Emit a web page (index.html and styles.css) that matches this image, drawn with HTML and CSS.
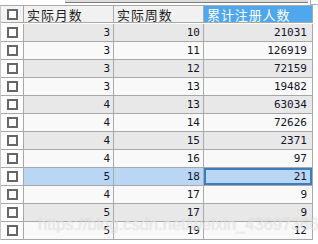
FILE: index.html
```html
<!DOCTYPE html>
<html>
<head>
<meta charset="utf-8">
<link rel="stylesheet" href="styles.css">
</head>
<body>
<div class="topstrip">
  <div class="topbar"></div>
  <div class="topbox"></div>
</div>
<div class="grid">
  <div class="cell hd chk"><span class="box"></span></div>
  <div class="cell hd">实际月数</div>
  <div class="cell hd">实际周数</div>
  <div class="cell hd active">累计注册人数</div>

  <div class="cell chk"><span class="box"></span></div><div class="cell num odd">3</div><div class="cell num odd">10</div><div class="cell num odd">21031</div>
  <div class="cell chk"><span class="box"></span></div><div class="cell num even">3</div><div class="cell num even">11</div><div class="cell num even">126919</div>
  <div class="cell chk"><span class="box"></span></div><div class="cell num odd">3</div><div class="cell num odd">12</div><div class="cell num odd">72159</div>
  <div class="cell chk"><span class="box"></span></div><div class="cell num even">3</div><div class="cell num even">13</div><div class="cell num even">19482</div>
  <div class="cell chk"><span class="box"></span></div><div class="cell num odd">4</div><div class="cell num odd">13</div><div class="cell num odd">63034</div>
  <div class="cell chk"><span class="box"></span></div><div class="cell num even">4</div><div class="cell num even">14</div><div class="cell num even">72626</div>
  <div class="cell chk"><span class="box"></span></div><div class="cell num odd">4</div><div class="cell num odd">15</div><div class="cell num odd">2371</div>
  <div class="cell chk"><span class="box"></span></div><div class="cell num even">4</div><div class="cell num even">16</div><div class="cell num even">97</div>
  <div class="cell chk"><span class="box"></span></div><div class="cell num sel">5</div><div class="cell num sel">18</div><div class="cell num sel focus">21</div>
  <div class="cell chk"><span class="box"></span></div><div class="cell num even">4</div><div class="cell num even">17</div><div class="cell num even">9</div>
  <div class="cell chk"><span class="box"></span></div><div class="cell num odd">5</div><div class="cell num odd">17</div><div class="cell num odd">9</div>
  <div class="cell chk"><span class="box"></span></div><div class="cell num even">5</div><div class="cell num even">19</div><div class="cell num even">12</div>
</div>
<div class="watermark">https://blog.csdn.net/weixin_43697366</div>
</body>
</html>
```

FILE: styles.css
```css
html, body {
  margin: 0;
  padding: 0;
  background: #ffffff;
  width: 318px;
  height: 244px;
  overflow: hidden;
  position: relative;
}
.topstrip {
  height: 5px;
  display: flex;
  align-items: flex-start;
  background: #ffffff;
}
.topbar {
  margin-left: 65px;
  width: 243px;
  height: 2px;
  background: #dcdcdc;
  border-bottom: 1px solid #7c7c7c;
}
.topbox {
  margin-left: 2px;
  width: 7px;
  height: 4px;
  border: 1px solid #9fb4cf;
  border-top: none;
  border-right: none;
  background: #fff;
}
.grid {
  display: grid;
  grid-template-columns: 23px 90px 90px 109px;
  grid-auto-rows: 18px;
  border-left: 1px solid #c9c9c9;
  border-top: 1px solid #a8a8a8;
  width: 312px;
}
.cell {
  box-sizing: border-box;
  border-right: 1px solid #a8a8a8;
  border-bottom: 1px solid #a8a8a8;
  display: flex;
  align-items: center;
  overflow: hidden;
  white-space: nowrap;
}
.hd {
  height: 17px;
  background: #f1f1f1;
  color: #1e1e1e;
  font-family: "Noto Sans CJK SC", sans-serif;
  font-size: 13px;
  letter-spacing: 0.9px;
  padding-left: 3px;
}
.grid > .hd { }
.hd.active {
  background: #4fa7ee;
  color: #ffffff;
}
.chk {
  justify-content: center;
  background: #ffffff;
  padding: 0;
}
.hd.chk { padding-left: 0; background: #f4f4f4; }
.box {
  width: 11px;
  height: 11px;
  box-sizing: border-box;
  border: 2px solid #676767;
  background: #fff;
}
.num {
  justify-content: flex-end;
  padding-right: 3px;
  font-family: "DejaVu Sans Mono", monospace;
  font-size: 11px;
  color: #141428;
}
.num:nth-child(4n) { padding-right: 5px; }
.odd { background: #e8e8e8; }
.even { background: #f9f9f9; }
.sel { background: #b9d7f5; }
.focus {
  box-shadow: inset 0 0 0 2px #3b7dc0;
}
.watermark {
  position: absolute;
  left: 38px;
  top: 215px;
  font-family: "Liberation Sans", Arial, sans-serif;
  font-size: 16.5px;
  color: rgba(255, 255, 255, 0.55);
  text-shadow: 0 0 1px rgba(120, 120, 120, 0.35);
  white-space: nowrap;
  pointer-events: none;
}
```
